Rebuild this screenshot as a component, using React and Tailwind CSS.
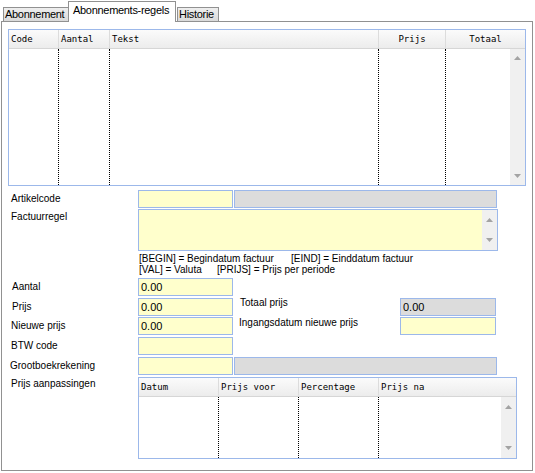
import React from "react";

function Arrow({ dir }) {
  return (
    <svg width="7" height="4" viewBox="0 0 7 4" className="block">
      {dir === "up" ? (
        <path d="M3.5 0 L7 4 L0 4 Z" fill="#a3a3a3" />
      ) : (
        <path d="M0 0 L7 0 L3.5 4 Z" fill="#a3a3a3" />
      )}
    </svg>
  );
}

function Scrollbar({ py = "py-[7px]" }) {
  return (
    <div className={`w-[15px] bg-[#f0f0f0] flex flex-col items-center justify-between ${py}`}>
      <Arrow dir="up" />
      <Arrow dir="down" />
    </div>
  );
}

function Input({ w, grey, value, ml }) {
  return (
    <div
      className={`h-[18px] border border-[#9cb8ea] ${grey ? "bg-[#dcdcdc]" : "bg-[#ffffcc]"} ${w} ${ml || ""} flex items-center pl-[2px] text-[11px] leading-[16px]`}
    >
      {value}
    </div>
  );
}

function Label({ children, pl = "pl-[3px]" }) {
  return (
    <div className={`w-[130px] ${pl} text-[10px] leading-[12px] whitespace-nowrap`}>{children}</div>
  );
}

const hcell = "border-r border-[#dcdcdc] flex items-center";
const dot = "border-r border-dotted border-black";

export default function App() {
  return (
    <div className="w-[535px] h-[473px] bg-white overflow-hidden font-['Liberation_Sans',Arial,sans-serif] text-black">
      {/* tabs */}
      <div className="h-[22px] flex items-end pl-[3px] relative z-10">
        <div className="w-[65px] h-[14px] mb-px border-t border-l border-[#919191] bg-gradient-to-b from-[#eeeeee] to-[#dadada] pl-[1px] flex items-center text-[11px] tracking-[-0.3px] leading-[13px] whitespace-nowrap">
          Abonnement
        </div>
        <div className="w-[108px] h-[21px] border-t border-l border-r border-[#919191] bg-white pl-[4px] pb-[3px] flex items-center text-[11px] tracking-[-0.3px] leading-[13px] whitespace-nowrap">
          Abonnements-regels
        </div>
        <div className="ml-px w-[42px] h-[14px] mb-px border-t border-l border-r border-[#919191] bg-gradient-to-b from-[#eeeeee] to-[#dadada] pl-[1px] flex items-center text-[11px] tracking-[-0.3px] leading-[13px] whitespace-nowrap">
          Historie
        </div>
      </div>

      {/* panel */}
      <div className="-mt-px ml-[1px] w-[532px] h-[450px] border border-[#919191] bg-white pl-[6px] pt-[7px]">
        {/* table 1 */}
        <div className="w-[518px] h-[157px] border border-[#9cb8ea] flex flex-col">
          <div className="h-[19px] flex border-b border-[#d6d6d6] bg-gradient-to-b from-[#fbfbfb] to-[#ececec] font-['DejaVu_Sans_Mono',monospace] text-[9px] leading-[12px]">
            <div className={`w-[50px] pl-[2px] ${hcell}`}>Code</div>
            <div className={`w-[51px] pl-[2px] ${hcell}`}>Aantal</div>
            <div className={`w-[269px] pl-[2px] ${hcell}`}>Tekst</div>
            <div className={`w-[67px] justify-center ${hcell}`}>Prijs</div>
            <div className="flex-1 flex items-center justify-center">Totaal</div>
          </div>
          <div className="flex-1 flex">
            <div className={`w-[50px] ${dot}`} />
            <div className={`w-[51px] ${dot}`} />
            <div className={`w-[269px] ${dot}`} />
            <div className={`w-[67px] ${dot}`} />
            <div className="flex-1" />
            <Scrollbar />
          </div>
        </div>

        {/* Artikelcode */}
        <div className="mt-[4px] flex items-center h-[18px]">
          <Label>Artikelcode</Label>
          <Input w="w-[95px]" />
          <Input w="w-[263px]" grey ml="ml-px" />
        </div>

        {/* Factuurregel */}
        <div className="mt-[1px] flex items-start">
          <div className="pt-[2px]">
            <Label>Factuurregel</Label>
          </div>
          <div className="w-[360px] h-[42px] border border-[#9cb8ea] bg-[#ffffcc] flex">
            <div className="flex-1" />
            <Scrollbar py="py-[8px]" />
          </div>
        </div>

        {/* help */}
        <div className="ml-[131px] mt-[2px] text-[10px] leading-[11px] whitespace-nowrap">
          <div className="flex">
            <span className="w-[152px]">[BEGIN] = Begindatum factuur</span>
            <span>[EIND] = Einddatum factuur</span>
          </div>
          <div className="flex">
            <span className="w-[78px]">[VAL] = Valuta</span>
            <span>[PRIJS] = Prijs per periode</span>
          </div>
        </div>

        {/* Aantal */}
        <div className="mt-[3px] flex items-center h-[18px]">
          <Label pl="pl-[4px]">Aantal</Label>
          <Input w="w-[95px]" value="0.00" />
        </div>

        {/* Prijs */}
        <div className="mt-[2px] flex items-center h-[18px]">
          <Label pl="pl-[4px]">Prijs</Label>
          <Input w="w-[95px]" value="0.00" />
          <div className="w-[167px] self-start -mt-px pl-[7px] text-[10px] leading-[12px] whitespace-nowrap">Totaal prijs</div>
          <Input w="w-[96px]" grey value="0.00" />
        </div>

        {/* Nieuwe prijs */}
        <div className="mt-[1px] flex items-center h-[18px]">
          <Label>Nieuwe prijs</Label>
          <Input w="w-[95px]" value="0.00" />
          <div className="w-[167px] self-start pl-[6px] text-[10px] leading-[12px] whitespace-nowrap">Ingangsdatum nieuwe prijs</div>
          <Input w="w-[96px]" />
        </div>

        {/* BTW code */}
        <div className="mt-[2px] flex items-center h-[18px]">
          <Label>BTW code</Label>
          <Input w="w-[95px]" />
        </div>

        {/* Grootboekrekening */}
        <div className="mt-[2px] flex items-center h-[18px]">
          <Label pl="pl-[2px]">Grootboekrekening</Label>
          <Input w="w-[95px]" />
          <Input w="w-[263px]" grey ml="ml-px" />
        </div>

        {/* Prijs aanpassingen */}
        <div className="mt-[2px] flex items-start">
          <div className="pt-[1px]">
            <Label>Prijs aanpassingen</Label>
          </div>
          <div className="w-[379px] h-[82px] border border-[#9cb8ea] flex flex-col">
            <div className="h-[19px] flex border-b border-[#d6d6d6] bg-gradient-to-b from-[#fbfbfb] to-[#ececec] font-['DejaVu_Sans_Mono',monospace] text-[9px] leading-[12px]">
              <div className={`w-[80px] pl-[2px] ${hcell}`}>Datum</div>
              <div className={`w-[80px] pl-[2px] ${hcell}`}>Prijs voor</div>
              <div className={`w-[80px] pl-[2px] ${hcell}`}>Percentage</div>
              <div className="flex-1 pl-[2px] flex items-center">Prijs na</div>
            </div>
            <div className="flex-1 flex">
              <div className={`w-[80px] ${dot}`} />
              <div className={`w-[80px] ${dot}`} />
              <div className={`w-[80px] ${dot}`} />
              <div className="flex-1" />
              <Scrollbar py="py-[8px]" />
            </div>
          </div>
        </div>
      </div>
    </div>
  );
}
